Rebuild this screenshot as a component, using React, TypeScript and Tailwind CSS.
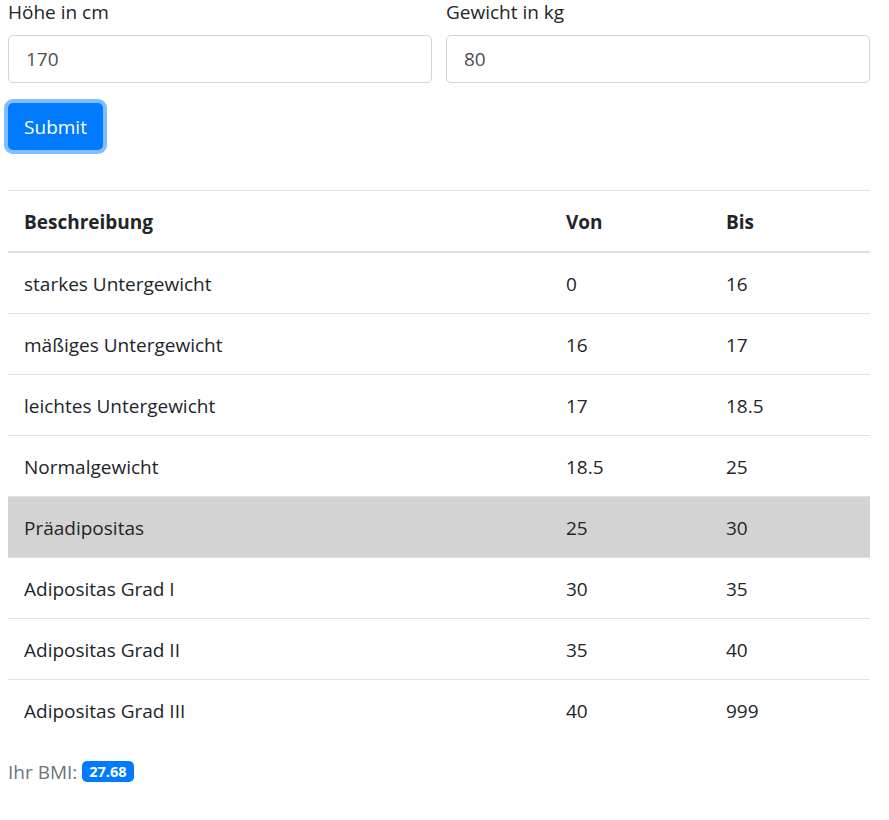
import { useState } from "react";

const ROWS = [
  { name: "starkes Untergewicht", from: "0", to: "16" },
  { name: "mäßiges Untergewicht", from: "16", to: "17" },
  { name: "leichtes Untergewicht", from: "17", to: "18.5" },
  { name: "Normalgewicht", from: "18.5", to: "25" },
  { name: "Präadipositas", from: "25", to: "30" },
  { name: "Adipositas Grad I", from: "30", to: "35" },
  { name: "Adipositas Grad II", from: "35", to: "40" },
  { name: "Adipositas Grad III", from: "40", to: "999" },
];

export default function App() {
  const [height, setHeight] = useState("170");
  const [weight, setWeight] = useState("80");

  const bmi = Number(weight) / Math.pow(Number(height) / 100, 2);

  return (
    <div
      className="px-[8px] w-[878px] text-[19px] text-[#212529] bg-white min-h-[820px]"
      style={{ fontFamily: '"Open Sans", "Noto Sans", sans-serif' }}
    >
      <div className="grid grid-cols-2 gap-[14px]">
        <div>
          <label className="block leading-[24px] mb-[11px]">Höhe in cm</label>
          <input
            value={height}
            onChange={(e) => setHeight(e.target.value)}
            className="block w-full h-[48px] px-[17px] border border-[#ced4da] rounded-[5px] text-[#495057] outline-none"
          />
        </div>
        <div>
          <label className="block leading-[24px] mb-[11px]">Gewicht in kg</label>
          <input
            value={weight}
            onChange={(e) => setWeight(e.target.value)}
            className="block w-full h-[48px] px-[17px] border border-[#ced4da] rounded-[5px] text-[#495057] outline-none"
          />
        </div>
      </div>

      <button className="mt-[20px] h-[47px] w-[95px] bg-[#007bff] text-white rounded-[5px] ring-4 ring-[#80bdff] leading-[30px]">
        Submit
      </button>

      <table className="mt-[40px] w-full border-collapse">
        <thead>
          <tr className="border-t border-[#dee2e6] border-b-2">
            <th className="w-[543px] text-left font-bold px-[16px] pt-[16px] pb-[14px] leading-[30px]">Beschreibung</th>
            <th className="w-[160px] text-left font-bold px-[15px] pt-[16px] pb-[14px] leading-[30px]">Von</th>
            <th className="text-left font-bold px-[15px] pt-[16px] pb-[14px] leading-[30px]">Bis</th>
          </tr>
        </thead>
        <tbody>
          {ROWS.map((r, i) => (
            <tr
              key={r.name}
              className={
                (i > 0 ? "border-t border-[#dee2e6] " : "") +
                (r.name === "Präadipositas" ? "bg-[#d3d3d3]" : "")
              }
            >
              <td className="px-[16px] pt-[16px] pb-[14px] leading-[30px]">{r.name}</td>
              <td className="px-[15px] pt-[16px] pb-[14px] leading-[30px]">{r.from}</td>
              <td className="px-[15px] pt-[16px] pb-[14px] leading-[30px]">{r.to}</td>
            </tr>
          ))}
        </tbody>
      </table>

      <p className="mt-[17px] leading-[30px] text-[#6c757d]">
        Ihr BMI:{" "}
        <span className="inline-block bg-[#007bff] text-white font-bold text-[14.5px] leading-[15px] px-[7px] py-[3px] rounded-[5px] align-[2px]">
          {bmi.toFixed(2)}
        </span>
      </p>
    </div>
  );
}
